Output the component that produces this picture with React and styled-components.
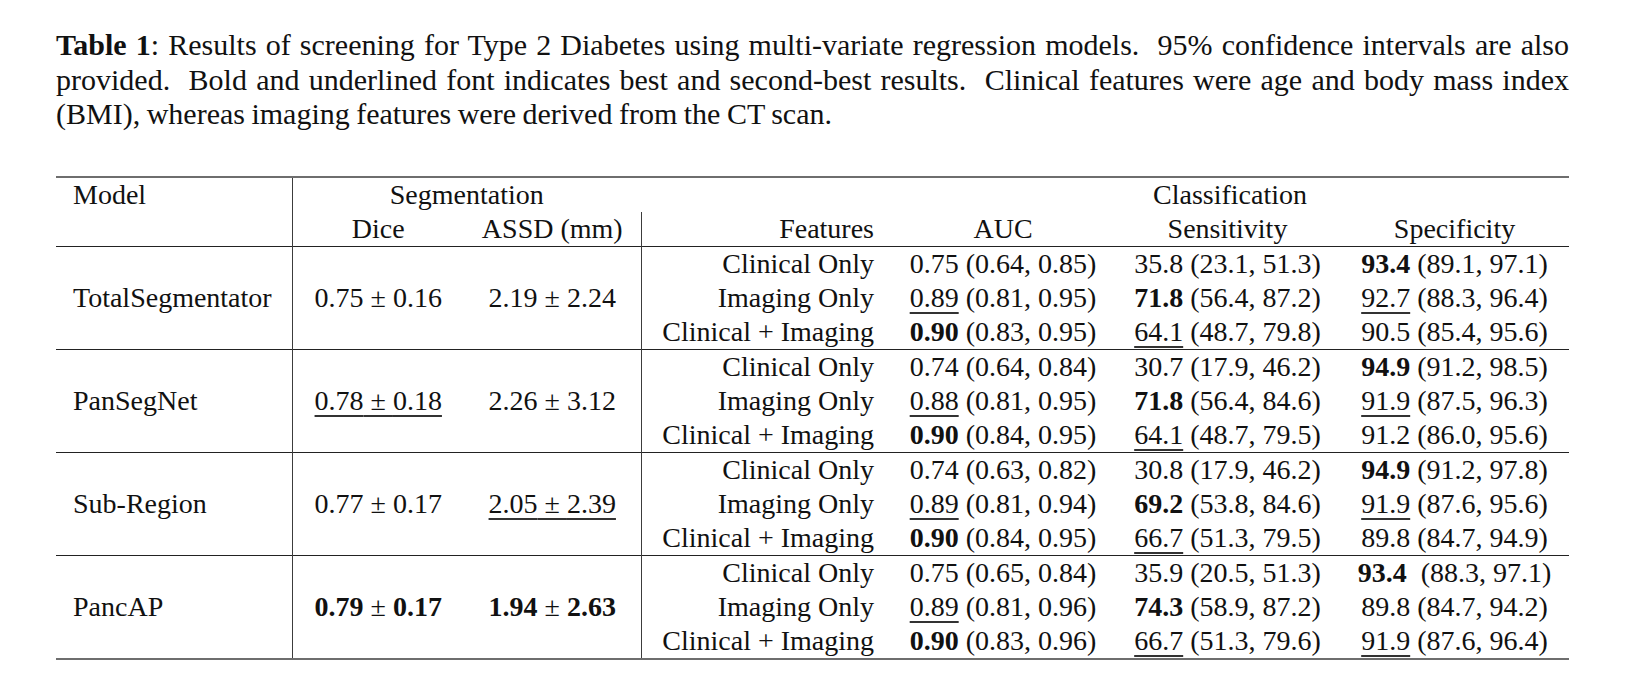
import React from "react";
import styled, { createGlobalStyle } from "styled-components";

const GlobalStyle = createGlobalStyle`
  html, body {
    margin: 0;
    padding: 0;
    background: #ffffff;
  }
  body {
    font-family: "Liberation Serif", "Times New Roman", serif;
    color: #111111;
  }
`;

const Page = styled.div`
  width: 1629px;
  height: 693px;
  padding: 28px 0 0 56px;
  box-sizing: border-box;
`;

const Caption = styled.div`
  width: 1513px;
  font-size: 30px;
  line-height: 34.5px;
  word-spacing: -1px;
`;

const CaptionLine = styled.div`
  white-space: nowrap;
  text-align: ${(props) => (props.$last ? "left" : "justify")};
  text-align-last: ${(props) => (props.$last ? "left" : "justify")};
`;

const Table = styled.table`
  width: 1513px;
  margin-top: 44px;
  border-collapse: collapse;
  table-layout: fixed;
  font-size: 28px;
  line-height: 34px;
  border-top: 2px solid #6e6e6e;
  border-bottom: 2px solid #6e6e6e;
`;

const Head = styled.thead`
  border-bottom: 1.5px solid #222222;
`;

const Block = styled.tbody`
  & + & {
    border-top: 1.5px solid #222222;
  }
`;

const Cell = styled.td`
  padding: 0;
  padding-left: ${(props) => (props.$align === "left" ? "17px" : "0")};
  padding-right: ${(props) => (props.$align === "right" ? "17px" : "0")};
  text-align: ${(props) => props.$align || "center"};
  vertical-align: middle;
  white-space: pre;
  font-weight: normal;
  border-right: ${(props) => (props.$ruleRight ? "1.5px solid #3c3c3c" : "none")};
  border-left: ${(props) => (props.$ruleLeft ? "1.5px solid #3c3c3c" : "none")};
`;

const Best = styled.b`
  font-weight: bold;
`;

const Second = styled.span`
  text-decoration: underline;
  text-decoration-thickness: 1.5px;
  text-underline-offset: 5px;
  text-decoration-color: #333333;
`;

const Mark = ({ kind, children }) => {
  if (kind === "b") return <Best>{children}</Best>;
  if (kind === "u") return <Second>{children}</Second>;
  return <>{children}</>;
};

// [value, interval, mark, extra gap]
const Metric = ({ cell }) => {
  const [value, ci, kind, gap] = cell;
  return (
    <>
      <Mark kind={kind}>{value}</Mark>
      {gap ? "\u00a0 " : " "}
      {ci}
    </>
  );
};

// [mean, sd, mark]
const MeanSd = ({ cell }) => {
  const [mean, sd, kind] = cell;
  if (kind === "u") {
    return (
      <Second>
        {mean} ± {sd}
      </Second>
    );
  }
  return (
    <>
      <Mark kind={kind}>{mean}</Mark> ± <Mark kind={kind}>{sd}</Mark>
    </>
  );
};

const blocks = [
  {
    model: "TotalSegmentator",
    dice: ["0.75", "0.16", ""],
    assd: ["2.19", "2.24", ""],
    rows: [
      ["Clinical Only", ["0.75", "(0.64, 0.85)", ""], ["35.8", "(23.1, 51.3)", ""], ["93.4", "(89.1, 97.1)", "b"]],
      ["Imaging Only", ["0.89", "(0.81, 0.95)", "u"], ["71.8", "(56.4, 87.2)", "b"], ["92.7", "(88.3, 96.4)", "u"]],
      ["Clinical + Imaging", ["0.90", "(0.83, 0.95)", "b"], ["64.1", "(48.7, 79.8)", "u"], ["90.5", "(85.4, 95.6)", ""]],
    ],
  },
  {
    model: "PanSegNet",
    dice: ["0.78", "0.18", "u"],
    assd: ["2.26", "3.12", ""],
    rows: [
      ["Clinical Only", ["0.74", "(0.64, 0.84)", ""], ["30.7", "(17.9, 46.2)", ""], ["94.9", "(91.2, 98.5)", "b"]],
      ["Imaging Only", ["0.88", "(0.81, 0.95)", "u"], ["71.8", "(56.4, 84.6)", "b"], ["91.9", "(87.5, 96.3)", "u"]],
      ["Clinical + Imaging", ["0.90", "(0.84, 0.95)", "b"], ["64.1", "(48.7, 79.5)", "u"], ["91.2", "(86.0, 95.6)", ""]],
    ],
  },
  {
    model: "Sub-Region",
    dice: ["0.77", "0.17", ""],
    assd: ["2.05", "2.39", "u"],
    rows: [
      ["Clinical Only", ["0.74", "(0.63, 0.82)", ""], ["30.8", "(17.9, 46.2)", ""], ["94.9", "(91.2, 97.8)", "b"]],
      ["Imaging Only", ["0.89", "(0.81, 0.94)", "u"], ["69.2", "(53.8, 84.6)", "b"], ["91.9", "(87.6, 95.6)", "u"]],
      ["Clinical + Imaging", ["0.90", "(0.84, 0.95)", "b"], ["66.7", "(51.3, 79.5)", "u"], ["89.8", "(84.7, 94.9)", ""]],
    ],
  },
  {
    model: "PancAP",
    dice: ["0.79", "0.17", "b"],
    assd: ["1.94", "2.63", "b"],
    rows: [
      ["Clinical Only", ["0.75", "(0.65, 0.84)", ""], ["35.9", "(20.5, 51.3)", ""], ["93.4", "(88.3, 97.1)", "b", true]],
      ["Imaging Only", ["0.89", "(0.81, 0.96)", "u"], ["74.3", "(58.9, 87.2)", "b"], ["89.8", "(84.7, 94.2)", ""]],
      ["Clinical + Imaging", ["0.90", "(0.83, 0.96)", "b"], ["66.7", "(51.3, 79.6)", "u"], ["91.9", "(87.6, 96.4)", "u"]],
    ],
  },
];

const widths = [236, 172, 177, 250, 224, 225, 229];

const App = () => {
  return (
    <Page>
      <GlobalStyle />
      <Caption>
        <CaptionLine>
          <Best>Table 1</Best>: Results of screening for Type 2 Diabetes using multi-variate regression
          models.&nbsp; 95% confidence intervals are also
        </CaptionLine>
        <CaptionLine>
          provided.&nbsp; Bold and underlined font indicates best and second-best results.&nbsp; Clinical
          features were age and body mass index
        </CaptionLine>
        <CaptionLine $last>(BMI), whereas imaging features were derived from the CT scan.</CaptionLine>
      </Caption>

      <Table>
        <colgroup>
          {widths.map((w, i) => (
            <col key={i} style={{ width: w }} />
          ))}
        </colgroup>
        <Head>
          <tr>
            <Cell as="th" $align="left" $ruleRight>
              Model
            </Cell>
            <Cell as="th" colSpan={2}>
              Segmentation
            </Cell>
            <Cell as="th" />
            <Cell as="th" colSpan={3}>
              Classification
            </Cell>
          </tr>
          <tr>
            <Cell as="th" $ruleRight />
            <Cell as="th">Dice</Cell>
            <Cell as="th">ASSD (mm)</Cell>
            <Cell as="th" $align="right" $ruleLeft>
              Features
            </Cell>
            <Cell as="th">AUC</Cell>
            <Cell as="th">Sensitivity</Cell>
            <Cell as="th">Specificity</Cell>
          </tr>
        </Head>
        {blocks.map((block) => (
          <Block key={block.model}>
            {block.rows.map((row, i) => (
              <tr key={row[0]}>
                {i === 0 && (
                  <>
                    <Cell rowSpan={3} $align="left" $ruleRight>
                      {block.model}
                    </Cell>
                    <Cell rowSpan={3}>
                      <MeanSd cell={block.dice} />
                    </Cell>
                    <Cell rowSpan={3}>
                      <MeanSd cell={block.assd} />
                    </Cell>
                  </>
                )}
                <Cell $align="right" $ruleLeft>
                  {row[0]}
                </Cell>
                <Cell>
                  <Metric cell={row[1]} />
                </Cell>
                <Cell>
                  <Metric cell={row[2]} />
                </Cell>
                <Cell>
                  <Metric cell={row[3]} />
                </Cell>
              </tr>
            ))}
          </Block>
        ))}
      </Table>
    </Page>
  );
};

export default App;
